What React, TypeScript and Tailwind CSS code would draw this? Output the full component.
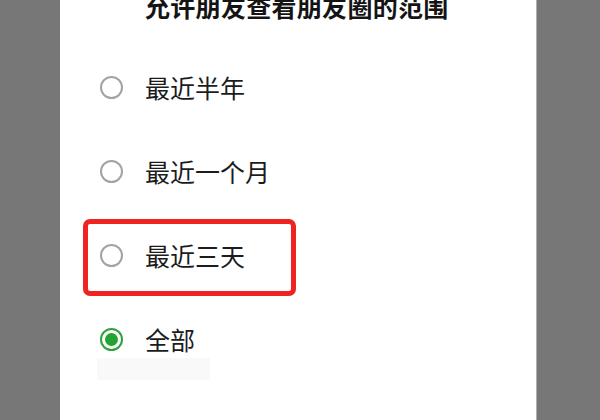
import React from "react";

const font = { fontFamily: '"Noto Sans CJK SC", "Noto Sans", sans-serif' };

function Radio({ checked }: { checked?: boolean }) {
  if (checked) {
    return (
      <div className="w-[23px] h-[23px] rounded-full border-2 border-[#2aa43a] flex items-center justify-center shrink-0">
        <div className="w-[13px] h-[13px] rounded-full bg-[#23a332]" />
      </div>
    );
  }
  return <div className="w-[23px] h-[23px] rounded-full border-2 border-[#a3a3a3] shrink-0" />;
}

function Row({ label, checked, children }: { label: string; checked?: boolean; children?: React.ReactNode }) {
  return (
    <div className="relative h-[84px] flex items-center pl-[40px]">
      <Radio checked={checked} />
      <span className="ml-[22px] text-[25px] leading-[25px] text-[#1c1c1c]">{label}</span>
      {children}
    </div>
  );
}

export default function App() {
  return (
    <div className="w-[600px] h-[420px] bg-[#777777] flex overflow-hidden" style={font}>
      <div className="ml-[60px] w-[477px] h-[420px] bg-white border-r border-[#b0b0b0] flex flex-col">
        <div className="mt-[-6px] pl-[85px] text-[25px] leading-[25px] font-bold text-[#141414] whitespace-nowrap tracking-[0.3px]">
          允许朋友查看朋友圈的范围
        </div>
        <div className="mt-[26px] flex flex-col">
          <Row label="最近半年" />
          <Row label="最近一个月" />
          <Row label="最近三天">
            <div className="absolute left-[23px] top-[6px] w-[213px] h-[77px] border-[5px] border-[#ee2322] rounded-[7px]" />
          </Row>
          <Row label="全部" checked>
            <div className="absolute left-[37px] top-[61px] w-[113px] h-[22px] bg-[#f9f9f9]" />
          </Row>
        </div>
      </div>
    </div>
  );
}
